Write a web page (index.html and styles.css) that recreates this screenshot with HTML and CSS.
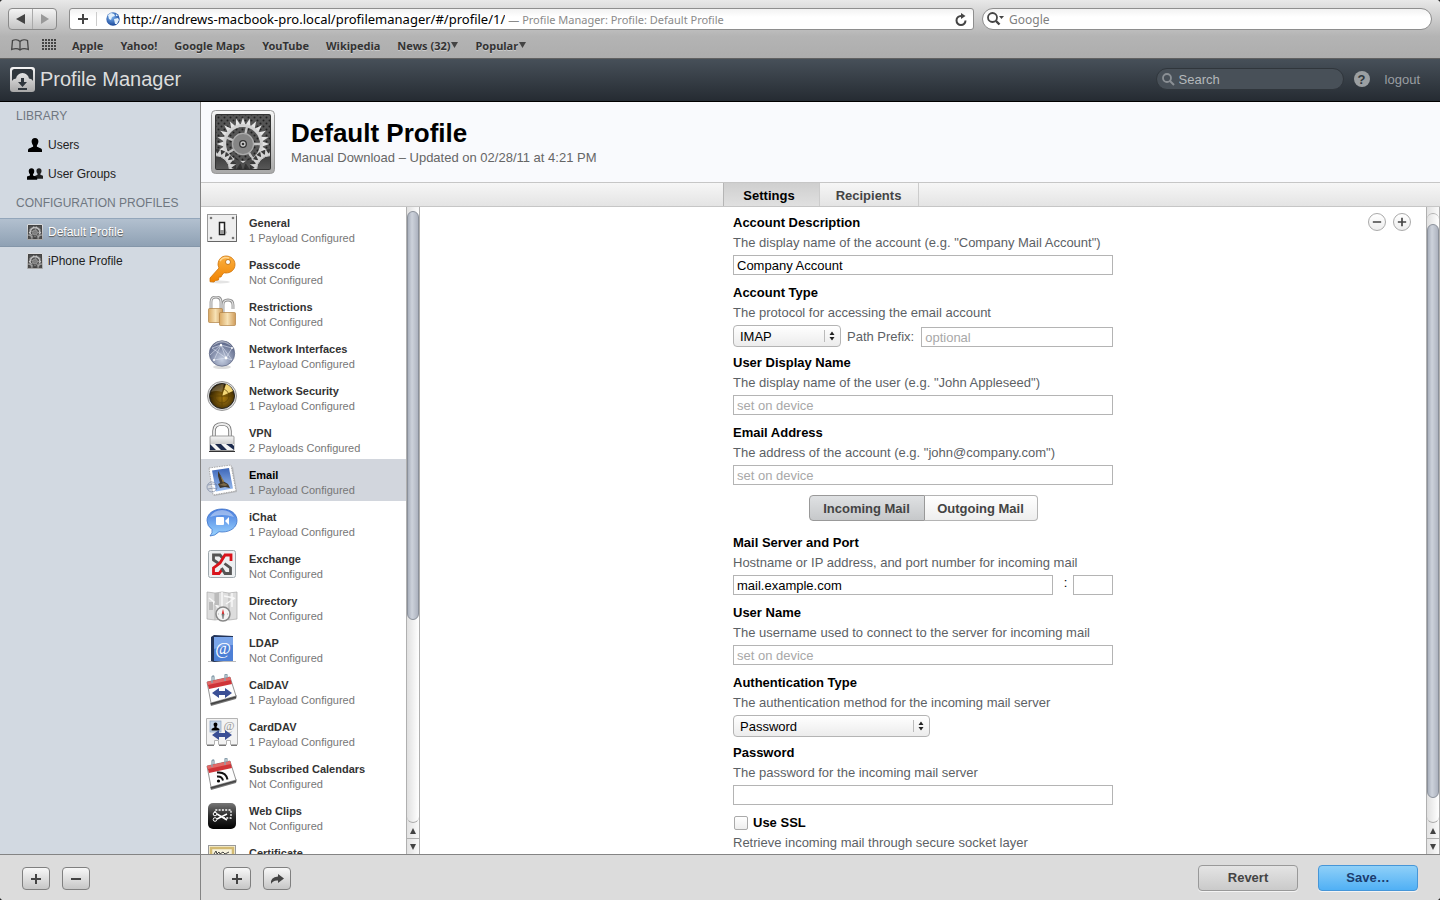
FILE: index.html
```html
<!DOCTYPE html>
<html lang="en">
<head>
    <meta charset="UTF-8">
    <meta name="viewport" content="width=device-width, initial-scale=1.0">
    <title>Profile Manager: Profile: Default Profile</title>
    <link rel="stylesheet" href="styles.css">
</head>
<body>
    <!-- shared shapes and gradients -->
    <svg class="defs" width="0" height="0" aria-hidden="true">
        <defs>
            <linearGradient id="gMetal" x1="0" y1="0" x2="0" y2="1"><stop offset="0" stop-color="#f6f6f6"/><stop offset="1" stop-color="#a8a8a8"/></linearGradient>
            <linearGradient id="gDark" x1="0" y1="0" x2="0" y2="1"><stop offset="0" stop-color="#3c3c3c"/><stop offset="1" stop-color="#777"/></linearGradient>
            <linearGradient id="gGold" x1="0" y1="0" x2="1" y2="0"><stop offset="0" stop-color="#d9a862"/><stop offset=".5" stop-color="#f7e2b5"/><stop offset="1" stop-color="#cf9c5b"/></linearGradient>
            <linearGradient id="gKey" x1="0" y1="0" x2="0" y2="1"><stop offset="0" stop-color="#fbb040"/><stop offset="1" stop-color="#f08200"/></linearGradient>
            <linearGradient id="gBlue" x1="0" y1="0" x2="0" y2="1"><stop offset="0" stop-color="#4579dd"/><stop offset="1" stop-color="#9ad4ff"/></linearGradient>
            <linearGradient id="gSky" x1="0" y1="0" x2="0" y2="1"><stop offset="0" stop-color="#3d66b8"/><stop offset="1" stop-color="#9dc0f2"/></linearGradient>
            <linearGradient id="gBlack" x1="0" y1="0" x2="0" y2="1"><stop offset="0" stop-color="#777"/><stop offset=".5" stop-color="#2a2a2a"/><stop offset="1" stop-color="#000"/></linearGradient>
            <radialGradient id="gGlobe" cx=".5" cy=".75" r=".75"><stop offset="0" stop-color="#c6cfe2"/><stop offset="1" stop-color="#525d80"/></radialGradient>
            <radialGradient id="gRadar" cx=".55" cy=".6" r=".6"><stop offset="0" stop-color="#a87a10"/><stop offset="1" stop-color="#2a1c00"/></radialGradient>
            <radialGradient id="gEarth" cx=".4" cy=".35" r=".7"><stop offset="0" stop-color="#7fb6f2"/><stop offset="1" stop-color="#123f93"/></radialGradient>

            <path id="tooth" d="M-2-14 L0-20 L2-14Z"/>
            <g id="teeth2"><use href="#tooth"/><use href="#tooth" transform="rotate(15)"/></g>
            <g id="teeth4"><use href="#teeth2"/><use href="#teeth2" transform="rotate(30)"/></g>
            <g id="teeth8"><use href="#teeth4"/><use href="#teeth4" transform="rotate(60)"/></g>
            <g id="teeth"><use href="#teeth8"/><use href="#teeth8" transform="rotate(120)"/><use href="#teeth8" transform="rotate(240)"/></g>
            <g id="cog">
                <use href="#teeth"/>
                <circle r="14" fill="none" stroke="#d2d2d2" stroke-width="2.400"/>
            </g>
            <pattern id="dots" width="6" height="6" patternUnits="userSpaceOnUse"><circle cx="1.500" cy="1.500" r="1" fill="#222"/><circle cx="4.500" cy="4.500" r="1" fill="#222"/></pattern>
            <clipPath id="plate"><rect x="5" y="5" width="54" height="54" rx="1"/></clipPath>
            <symbol id="profile" viewBox="0 0 64 64">
                <rect x=".5" y=".5" width="63" height="63" rx="4" fill="url(#gMetal)" stroke="#999"/>
                <rect x="4" y="4" width="56" height="56" rx="2" fill="#333"/>
                <g clip-path="url(#plate)">
                    <rect x="5" y="5" width="54" height="54" fill="#555"/>
                    <rect x="5" y="5" width="54" height="54" fill="url(#dots)"/>
                    <g transform="translate(32 34) scale(1.320)" fill="#e4e4e4">
                        <use href="#cog"/>
                        <path d="M0 0L3-13M0 0L14 0M0 0L-12 7M0 0L-13-5M0 0L8 12" stroke="#c4c4c4" stroke-width="1.800"/>
                        <circle r="8" fill="#858585" stroke="#aaa"/>
                        <circle r="2.500" fill="#ccc" stroke="#333"/><circle r="1" fill="#333"/>
                    </g>
                    <!-- shade under the two lower gears -->
                    <path d="M20 60L24 47 32 53 40 47 44 60z" fill="#2c2c2c" opacity=".8"/>
                    <g fill="#d4d4d4">
                        <g transform="translate(4 60)"><circle r="21" fill="#3a3a3a"/><use href="#cog" transform="scale(1.100)"/><circle r="14.500" fill="url(#gDark)" stroke="#ccc"/></g>
                        <g transform="translate(60 60)"><circle r="21" fill="#3a3a3a"/><use href="#cog" transform="scale(1.100)"/><circle r="14.500" fill="url(#gDark)" stroke="#ccc"/></g>
                    </g>
                </g>
            </symbol>
            <symbol id="person" viewBox="0 0 16 14">
                <path d="M8 0c2.200 0 3.500 1.500 3.400 3.600-.1 1.900-.9 3-1.500 3.800v1.300c1.600.9 4.500 1.300 5 2.800.2.700.1 1.700.1 2.500H1c0-.8-.1-1.800.1-2.500.5-1.500 3.400-1.900 5-2.800V7.400c-.6-.8-1.400-1.900-1.500-3.800C4.500 1.500 5.800 0 8 0z"/>
            </symbol>
            <symbol id="calendar" viewBox="0 0 32 32">
                <path d="M4 29l25-6 2-2-1 4-25 7z" fill="#777"/>
                <path d="M1 8l23-5 6 19-25 7z" fill="#fdfdfd" stroke="#777" stroke-width=".8"/>
                <path d="M1 8l23-5 2 7-23 5z" fill="#cf3438"/>
                <path d="M1 8l23-5 1 3-23 5z" fill="#e36a68"/>
                <path d="M6 9V3q1.500-2 2 0v3M19 7V1q1.500-2 2 0v3" fill="none" stroke="#8aa0ad" stroke-width="1.300"/>
                <path d="M5 30l25-7" stroke="#444" stroke-width="1.500"/>
            </symbol>
            <symbol id="arrows" viewBox="0 0 20 10">
                <path d="M0 5L7 0v3h6V0l7 5-7 5V7H7v3z" fill="#3a4f95"/>
            </symbol>
            <symbol id="plus" viewBox="0 0 12 12"><path d="M6 1v10M1 6h10" stroke="#444" stroke-width="2"/></symbol>
            <symbol id="minus" viewBox="0 0 12 12"><path d="M1 6h10" stroke="#444" stroke-width="2"/></symbol>
            <symbol id="updown" viewBox="0 0 18 14"><path d="M1.500 1v12" stroke="#bbb"/><path d="M6.500 6L9 2.500 11.500 6zM6.500 8L9 11.500 11.500 8z" fill="#222"/></symbol>
            <symbol id="up" viewBox="0 0 8 8"><path d="M1 7L4 1l3 6z" fill="#444"/></symbol>
            <symbol id="down" viewBox="0 0 8 8"><path d="M1 1l3 6 3-6z" fill="#444"/></symbol>
        </defs>
    </svg>

    <div class="window">
        <div class="browser">
            <div class="toolbar">
                <div class="history">
                    <button type="button" aria-label="Back"><svg width="10" height="10" viewBox="0 0 10 10"><path d="M9 0v10L0 5z" fill="#444"/></svg></button>
                    <button type="button" aria-label="Forward"><svg width="10" height="10" viewBox="0 0 10 10"><path d="M1 0v10l8-5z" fill="#999"/></svg></button>
                </div>
                <div class="address">
                    <button type="button" class="add" aria-label="Add bookmark"><svg width="12" height="12"><use href="#plus"/></svg></button>
                    <svg width="14" height="14" viewBox="0 0 14 14"><circle cx="7" cy="7" r="6.700" fill="url(#gEarth)"/><path d="M2 3l3-2 3 1 1 2-3 1-1 3-2-1zM8 7l4-1 1 2-2 4-2 0zM10 2l2 2-2 0z" fill="#e3f0fb"/></svg>
                    <input type="text" class="url" size="48" aria-label="Address" value="http://andrews-macbook-pro.local/profilemanager/#/profile/1/">
                    <span class="page-title">— Profile Manager: Profile: Default Profile</span>
                    <button type="button" class="reload" aria-label="Reload"><svg width="12" height="13" viewBox="0 0 12 13"><path d="M10.500 7.500A4.500 4.500 0 1 1 6 3h1" fill="none" stroke="#444" stroke-width="2"/><path d="M6 0l4.500 3L6 6z" fill="#444"/></svg></button>
                </div>
                <label class="google">
                    <svg width="18" height="14" viewBox="0 0 18 14"><circle cx="5.500" cy="5.500" r="4.500" fill="none" stroke="#444" stroke-width="1.800"/><path d="M9 9l3.500 3.500" stroke="#444" stroke-width="2.400"/><path d="M12 4h5l-2.500 3z" fill="#444"/></svg>
                    <input type="search" placeholder="Google" aria-label="Google">
                </label>
            </div>
            <nav class="bookmarks">
                <svg class="book" width="18" height="12" viewBox="0 0 18 12"><path d="M9 2.500C7 .5 3.500.5 1.500 1.500L.7 10.500C3.500 9.500 7 9.500 9 11c2-1.500 5.500-1.500 8.300-.5l-.8-9C14.500.5 11 .5 9 2.500zV11" fill="none" stroke="#444" stroke-width="1.300"/></svg>
                <svg class="sites" width="15" height="12" viewBox="0 0 15 12"><path d="M0 1h15M0 4h15M0 7h15M0 10h15" stroke="#444" stroke-width="2" stroke-dasharray="2 1"/></svg>
                <a href="#">Apple</a>
                <a href="#">Yahoo!</a>
                <a href="#">Google Maps</a>
                <a href="#">YouTube</a>
                <a href="#">Wikipedia</a>
                <a href="#">News (32)<svg width="7" height="6" viewBox="0 0 7 6"><path d="M0 0h7L3.500 6z" fill="#444"/></svg></a>
                <a href="#">Popular<svg width="7" height="6" viewBox="0 0 7 6"><path d="M0 0h7L3.500 6z" fill="#444"/></svg></a>
            </nav>
        </div>

        <header class="app-header">
            <svg width="25" height="25" viewBox="0 0 25 25"><rect width="25" height="25" rx="3" fill="url(#gMetal)"/><path d="M2 4.500q0-2.500 2.500-2.500h16q2.500 0 2.500 2.500V14q-1-2.500-4-2.500-1-5-6.500-5.500Q7 6.500 6 11.500q-3 0-4 2.500z" fill="#30373d"/><path d="M11 11h3v4h3l-4.500 5L8 15h3zM8 21h9v2H8z" fill="#30373d"/></svg>
            <h1>Profile Manager</h1>
            <label class="search">
                <svg width="13" height="13" viewBox="0 0 13 13"><circle cx="5" cy="5" r="4" fill="none" stroke="#8b9095" stroke-width="1.800"/><path d="M8 8l4 4" stroke="#8b9095" stroke-width="2"/></svg>
                <input type="search" placeholder="Search" aria-label="Search">
            </label>
            <button type="button" class="help">?</button>
            <a class="logout" href="#">logout</a>
        </header>

        <div class="app">
            <aside class="sidebar">
                <h2>LIBRARY</h2>
                <a href="#"><svg width="16" height="14"><use href="#person"/></svg>Users</a>
                <a href="#"><svg width="16" height="12" viewBox="0 0 16 12"><use href="#person" width="12" height="11" x="6" y="0" opacity=".85"/><use href="#person" width="13" height="12" x="-2" y="0"/></svg>User Groups</a>
                <h2>CONFIGURATION PROFILES</h2>
                <a href="#" class="selected"><svg width="16" height="16"><use href="#profile"/></svg>Default Profile</a>
                <a href="#"><svg width="16" height="16"><use href="#profile"/></svg>iPhone Profile</a>
            </aside>

            <main class="main">
                <div class="profile-header">
                    <svg width="64" height="64"><use href="#profile"/></svg>
                    <div class="profile-title">
                        <h2>Default Profile</h2>
                        <p>Manual Download – Updated on 02/28/11 at 4:21 PM</p>
                    </div>
                </div>

                <div class="tabs">
                    <button type="button" class="active">Settings</button>
                    <button type="button">Recipients</button>
                </div>

                <div class="panes">
                    <nav class="payloads">
                        <a href="#">
                            <svg width="32" height="32" viewBox="0 0 32 32"><rect x="1.500" y="2.500" width="29" height="27" fill="#eee" stroke="#999"/><path d="M2 29.500h28.500V4" fill="none" stroke="#666"/><g fill="#777"><circle cx="5" cy="6" r="1.300"/><circle cx="27" cy="6" r="1.300"/><circle cx="5" cy="26" r="1.300"/><circle cx="27" cy="26" r="1.300"/></g><path d="M18 13l3 8-3 2z" fill="#bbb"/><rect x="13.500" y="10.500" width="5" height="12" fill="#fff" stroke="#222" stroke-width="1.500"/><path d="M14 18h4v4h-4z" fill="#999"/></svg>
                            <span><strong>General</strong><small>1 Payload Configured</small></span>
                        </a>
                        <a href="#">
                            <svg width="32" height="32" viewBox="0 0 32 32"><ellipse cx="14" cy="28" rx="10" ry="1.500" fill="#e4e4e4"/><path d="M12 11C12 5 16 2 20 2c5 0 9 3.500 9 8.500S25 19 20 19q-1 0-2-.3L16 21l-1 2-2 0-.5 3-3 .5L8 28l-4-.3V24l9-10z" fill="url(#gKey)" stroke="#cf7206" stroke-width=".8"/><path d="M14 7q3-5 9-3" fill="none" stroke="#ffd792" stroke-width="1.500"/><circle cx="22" cy="8" r="2.500" fill="#fff" stroke="#b96300" stroke-width=".8"/></svg>
                            <span><strong>Passcode</strong><small>Not Configured</small></span>
                        </a>
                        <a href="#">
                            <svg width="32" height="32" viewBox="0 0 32 32"><g fill="none" stroke="#8d8d8d" stroke-width="2.800"><path d="M5 13V6q0-5 5-5t5 5v8M17 17V9q0-5 5-5t5 5v4"/></g><g fill="none" stroke="#e6e6e6" stroke-width="1.200"><path d="M5 13V6q0-5 5-5t5 5v8M17 17V9q0-5 5-5t5 5v4"/></g><rect x="2.500" y="12.500" width="14" height="14" rx="1" fill="url(#gGold)" stroke="#b08144" stroke-width=".7"/><rect x="13.500" y="16.500" width="16" height="13" rx="1" fill="url(#gGold)" stroke="#b08144" stroke-width=".7"/></svg>
                            <span><strong>Restrictions</strong><small>Not Configured</small></span>
                        </a>
                        <a href="#">
                            <svg width="32" height="32" viewBox="0 0 32 32"><ellipse cx="16" cy="29" rx="9" ry="2" fill="#ddd"/><circle cx="16" cy="15.500" r="12.700" fill="url(#gGlobe)" stroke="#5d6683" stroke-width=".7"/><path d="M6 10L15 7 26 10 20 20 8 22 15 7 20 20 26 22M6 10l14 10M4 17l11-10M15 7l11 15" fill="none" stroke="#dfe6f3" stroke-width=".6"/><g fill="#fff"><circle cx="15" cy="7" r="1.200"/><circle cx="20" cy="20" r="1.400"/><circle cx="8" cy="22" r="1"/><circle cx="26" cy="10" r="1"/></g><path d="M6 9q10-9 20 0-4-6-10-6T6 9z" fill="#fff" opacity=".5"/></svg>
                            <span><strong>Network Interfaces</strong><small>1 Payload Configured</small></span>
                        </a>
                        <a href="#">
                            <svg width="32" height="32" viewBox="0 0 32 32"><circle cx="16" cy="16" r="14.500" fill="#ddd" stroke="#999"/><circle cx="16" cy="16" r="12.500" fill="url(#gRadar)" stroke="#222"/><path d="M16 16L20 4q5 2 7 7z" fill="#f4d878"/><path d="M3.500 16h25M16 3.500v25" stroke="#5d4205" stroke-width=".7"/><circle cx="16" cy="16" r="7" fill="none" stroke="#5d4205" stroke-width=".7"/><path d="M5 12Q9 4 18 4l-2 8q-6-2-11 0z" fill="#fff" opacity=".2"/></svg>
                            <span><strong>Network Security</strong><small>1 Payload Configured</small></span>
                        </a>
                        <a href="#">
                            <svg width="32" height="32" viewBox="0 0 32 32"><path d="M8 16V9q0-7 8-7t8 7v7" fill="none" stroke="#777" stroke-width="3.500"/><path d="M8 16V9q0-7 8-7t8 7v7" fill="none" stroke="#eee" stroke-width="1.800"/><rect x="4" y="14" width="24" height="15" rx="1" fill="url(#gMetal)" stroke="#888" stroke-width=".8"/><path d="M4 22h24v6H4z" fill="#f4f4f4"/><path d="M4 22l6 6H4zM9 22h6l6 6h-6zM20 22h6l2 2v4z" fill="#1d2b4d"/><path d="M3 29.500h26" stroke="#333"/></svg>
                            <span><strong>VPN</strong><small>2 Payloads Configured</small></span>
                        </a>
                        <a href="#" class="selected">
                            <svg width="32" height="32" viewBox="0 0 32 32"><path d="M5 5l22-2 4 25-23 4z" fill="#888" opacity=".4"/><path d="M3 4l22-3 5 26-23 4z" fill="#fff" stroke="#aaa" stroke-dasharray="1.500 1"/><path d="M6 6.500l17-2.500 4 20.500-17 3z" fill="url(#gSky)"/><path d="M12 7l3 5 2 5 5 3 2 4-5-1-5 1-2-4 2-1-2-7z" fill="#40382d"/><path d="M14 11l4 6-1 2z" fill="#9a7c43"/><path d="M13 21l6 1 3-1-4-2z" fill="#7b6a48"/><circle cx="6" cy="23" r="5" fill="none" stroke="#6d7c9b" opacity=".6"/><path d="M2 21q5-2 9 0M2 25q5-2 9 0" fill="none" stroke="#6d7c9b" opacity=".6"/></svg>
                            <span><strong>Email</strong><small>1 Payload Configured</small></span>
                        </a>
                        <a href="#">
                            <svg width="32" height="32" viewBox="0 0 32 32"><path d="M16 3c9 0 15 5 15 11.500S25 26 16 26l-3-.3Q9 30 4 30q3-3 2-6.500-5-3.500-5-9C1 8 7 3 16 3z" fill="url(#gBlue)" stroke="#3c72c8" stroke-width=".8"/><path d="M4 11Q8 4 16 4t12 7Q16 7 4 11z" fill="#fff" opacity=".4"/><rect x="10" y="11" width="8" height="8" rx="1" fill="#fff"/><path d="M19 15l4-4v8z" fill="#fff"/></svg>
                            <span><strong>iChat</strong><small>1 Payload Configured</small></span>
                        </a>
                        <a href="#">
                            <svg width="32" height="32" viewBox="0 0 32 32"><rect x="2.500" y="2.500" width="27" height="27" rx="2" fill="#edf0f2" stroke="#9fa8ad"/><g fill="none" stroke-width="2.800"><path d="M16.500 10L14 7H7.500v5l6 4" stroke="#555"/><path d="M25 13V7h-6l-5 8-6.500 5v5.500H13l3-4" stroke="#d9141c"/><path d="M18.500 15.500l6 4.500v5.500H19L15.500 20" stroke="#555"/></g></svg>
                            <span><strong>Exchange</strong><small>Not Configured</small></span>
                        </a>
                        <a href="#">
                            <svg width="32" height="32" viewBox="0 0 32 32"><path d="M1 2l8 1 7-1 7 1 8-1v27l-8 1-7-1-7 1-8-1z" fill="#ddd" stroke="#aaa" stroke-width=".7"/><path d="M9 3v27M23 3v27" stroke="#b5b5b5"/><path d="M16 2v27M3 8l5 4-4 7M12 3l-2 12 5 5M18 6l10 2M20 14l9-6M26 3v14" fill="none" stroke="#f8f8f8" stroke-width="1.500"/><path d="M9 3h4v12H9zM3 12h4v8H3z" fill="#bbb"/><circle cx="17" cy="24" r="7" fill="#f4f4f4" stroke="#888" stroke-width="1.500"/><path d="M17 19l1.200 5h-2.400z" fill="#d22"/><path d="M17 29l1.200-5h-2.400zM12 24h1M21 24h1" fill="#777" stroke="#777" stroke-width=".5"/></svg>
                            <span><strong>Directory</strong><small>Not Configured</small></span>
                        </a>
                        <a href="#">
                            <svg width="32" height="32" viewBox="0 0 32 32"><path d="M2 29.500h28" stroke="#bbb"/><path d="M5 5l3-2 19 1v24l-19 2-3-1z" fill="#223459"/><path d="M8 5h19v24H8z" fill="#4d80d6"/><path d="M8 5h19v8q-8 0-19 4z" fill="#7aa5ea"/><text x="17" y="22" font-family="Liberation Serif" font-size="17" text-anchor="middle" fill="#fff">@</text></svg>
                            <span><strong>LDAP</strong><small>Not Configured</small></span>
                        </a>
                        <a href="#">
                            <svg width="32" height="32" viewBox="0 0 32 32"><use href="#calendar" width="32" height="32"/><use href="#arrows" width="20" height="10" x="6" y="14"/></svg>
                            <span><strong>CalDAV</strong><small>1 Payload Configured</small></span>
                        </a>
                        <a href="#">
                            <svg width="32" height="32" viewBox="0 0 32 32"><path d="M.5 2.500h31v26h-7v-4h-4v4h-8v-4h-4v4h-8z" fill="#f3f3f3" stroke="#b4b4b4"/><path d="M1 29.500h7M13 29.500h7M25 29.500h6" stroke="#777"/><rect x="4" y="5" width="11" height="11" fill="#c3d5ea" stroke="#8ba3c0" stroke-width=".7"/><use href="#person" x="5" y="6" width="9" height="9"/><text x="23" y="14" font-family="Liberation Serif" font-size="12" text-anchor="middle" fill="#999">@</text><use href="#arrows" width="20" height="10" x="6" y="14"/></svg>
                            <span><strong>CardDAV</strong><small>1 Payload Configured</small></span>
                        </a>
                        <a href="#">
                            <svg width="32" height="32" viewBox="0 0 32 32"><use href="#calendar" width="32" height="32"/><circle cx="12.500" cy="23" r="1.600"/><path d="M11 18.500q5-.5 6 4M11 14.500q9-1 10.500 7" fill="none" stroke="#111" stroke-width="2"/></svg>
                            <span><strong>Subscribed Calendars</strong><small>Not Configured</small></span>
                        </a>
                        <a href="#">
                            <svg width="32" height="32" viewBox="0 0 32 32"><rect x="2" y="3" width="28" height="26" rx="5" fill="url(#gBlack)"/><path d="M9 13V10h16v8h-7" fill="none" stroke="#fff" stroke-width="1.300" stroke-dasharray="2 1.300"/><path d="M11 19l10-5M11 14l10 6" stroke="#fff" stroke-width="1.500"/><circle cx="9" cy="14" r="1.800" fill="none" stroke="#fff"/><circle cx="9" cy="19.500" r="1.800" fill="none" stroke="#fff"/></svg>
                            <span><strong>Web Clips</strong><small>Not Configured</small></span>
                        </a>
                        <a href="#">
                            <svg width="32" height="32" viewBox="0 0 32 32"><rect x="2.500" y="3.500" width="27" height="24" fill="#f8f3dd" stroke="#999"/><rect x="5" y="6" width="22" height="19" fill="none" stroke="#d3ba72" stroke-width="2.500"/><path d="M8 12l2-3 1 3 2-2 1 2 3-2 2 2 4-2" fill="none" stroke="#444"/></svg>
                            <span><strong>Certificate</strong><small>Not Configured</small></span>
                        </a>
                    </nav>
                    <div class="scrollbar list-scroll">
                        <div class="track"><div class="thumb"></div></div>
                        <svg width="8" height="8"><use href="#up"/></svg>
                        <svg width="8" height="8"><use href="#down"/></svg>
                    </div>

                    <div class="detail">
                        <form class="settings">
                            <div class="field">
                                <label for="description">Account Description</label>
                                <p>The display name of the account (e.g. "Company Mail Account")</p>
                                <div class="control"><input type="text" id="description" value="Company Account"></div>
                            </div>
                            <div class="field">
                                <label for="type">Account Type</label>
                                <p>The protocol for accessing the email account</p>
                                <div class="control">
                                    <div class="select short">
                                        <select id="type"><option>IMAP</option><option>POP</option></select>
                                        <svg width="18" height="14"><use href="#updown"/></svg>
                                    </div>
                                    <label class="inline" for="prefix">Path Prefix:</label>
                                    <input type="text" id="prefix" placeholder="optional">
                                </div>
                            </div>
                            <div class="field">
                                <label for="displayName">User Display Name</label>
                                <p>The display name of the user (e.g. "John Appleseed")</p>
                                <div class="control"><input type="text" id="displayName" placeholder="set on device"></div>
                            </div>
                            <div class="field">
                                <label for="address">Email Address</label>
                                <p>The address of the account (e.g. "john@company.com")</p>
                                <div class="control"><input type="text" id="address" placeholder="set on device"></div>
                            </div>
                            <div class="segments">
                                <button type="button" class="active">Incoming Mail</button>
                                <button type="button">Outgoing Mail</button>
                            </div>
                            <div class="field">
                                <label for="server">Mail Server and Port</label>
                                <p>Hostname or IP address, and port number for incoming mail</p>
                                <div class="control">
                                    <input type="text" id="server" value="mail.example.com">
                                    <span class="colon">:</span>
                                    <input type="text" class="port" aria-label="Port">
                                </div>
                            </div>
                            <div class="field">
                                <label for="userName">User Name</label>
                                <p>The username used to connect to the server for incoming mail</p>
                                <div class="control"><input type="text" id="userName" placeholder="set on device"></div>
                            </div>
                            <div class="field">
                                <label for="auth">Authentication Type</label>
                                <p>The authentication method for the incoming mail server</p>
                                <div class="control">
                                    <div class="select">
                                        <select id="auth"><option>Password</option><option>None</option></select>
                                        <svg width="18" height="14"><use href="#updown"/></svg>
                                    </div>
                                </div>
                            </div>
                            <div class="field">
                                <label for="password">Password</label>
                                <p>The password for the incoming mail server</p>
                                <div class="control"><input type="password" id="password"></div>
                            </div>
                            <div class="field">
                                <label class="check"><input type="checkbox">Use SSL</label>
                                <p>Retrieve incoming mail through secure socket layer</p>
                            </div>
                        </form>
                        <div class="round-buttons">
                            <button type="button" aria-label="Remove payload"><svg width="10" height="10"><use href="#minus"/></svg></button>
                            <button type="button" aria-label="Add payload"><svg width="10" height="10"><use href="#plus"/></svg></button>
                        </div>
                    </div>
                    <div class="scrollbar detail-scroll">
                        <div class="track"><div class="thumb"></div></div>
                        <svg width="8" height="8"><use href="#up"/></svg>
                        <svg width="8" height="8"><use href="#down"/></svg>
                    </div>
                </div>
            </main>
        </div>

        <footer class="footer">
            <div class="footer-left">
                <button type="button" class="square" aria-label="Add profile"><svg width="12" height="12"><use href="#plus"/></svg></button>
                <button type="button" class="square" aria-label="Remove profile"><svg width="12" height="12"><use href="#minus"/></svg></button>
            </div>
            <div class="footer-right">
                <button type="button" class="square" aria-label="Add"><svg width="12" height="12"><use href="#plus"/></svg></button>
                <button type="button" class="square" aria-label="Actions"><svg width="14" height="12" viewBox="0 0 14 12"><path d="M8 1l6 4.500L8 10V7.500Q3 7 1 11 0 4 8 3.500z" fill="#444"/></svg></button>
                <button type="button" class="push revert">Revert</button>
                <button type="button" class="push save">Save…</button>
            </div>
        </footer>
    </div>
</body>
</html>
```
FILE: styles.css
```css
* {
    box-sizing: border-box;
}

body {
    margin: 0;
    background: #2a2a2a;
    font-family: "Liberation Sans", Arial, sans-serif;
    font-size: 13px;
    color: #000;
}

h1, h2, p {
    margin: 0;
    font-weight: normal;
}

a {
    color: inherit;
    text-decoration: none;
}

button, input, select {
    margin: 0;
    padding: 0;
    border: none;
    background: none;
    font: inherit;
    color: inherit;
}

button {
    display: flex;
    align-items: center;
    justify-content: center;
}

input[type="search"] {
    appearance: none;
    flex: 1;
    min-width: 0;
}

svg {
    display: block;
    flex: none;
}

.defs {
    position: absolute;
}

.window {
    display: flex;
    flex-direction: column;
    height: 100vh;
    border-radius: 4px;
    overflow: hidden;
    background: #fff;
}

/* browser chrome */
.browser {
    flex: none;
    height: 59px;
    padding: 8px 8px 0;
    background: linear-gradient(#e8e8e8, #b4b4b4 36px, #adadad);
    border-bottom: 1px solid #616161;
    font-family: "Noto Sans", sans-serif;
}

.toolbar {
    display: flex;
    height: 22px;
}

.history {
    display: flex;
    width: 49px;
    margin-right: 12px;
    border: 1px solid #8a8a8a;
    border-radius: 4px;
    background: linear-gradient(#f4f4f4, #c4c4c4);
}

.history button {
    flex: 1;
}

.history button + button {
    border-left: 1px solid #aaa;
}

.address {
    display: flex;
    flex: 1;
    align-items: center;
    margin-right: 8px;
    border: 1px solid #8e8e8e;
    border-radius: 3px;
    background: linear-gradient(#f2f2f2, #fff 8px);
}

.add {
    width: 27px;
    height: 14px;
    margin-right: 9px;
    border-right: 1px solid #ccc;
}

.url {
    field-sizing: content;
    margin: 0 3px;
}

.page-title {
    flex: 1;
    font-size: 11px;
    color: #8a8a8a;
}

.reload {
    margin-right: 6px;
}

.google {
    display: flex;
    align-items: center;
    gap: 4px;
    width: 450px;
    padding: 0 4px;
    border: 1px solid #8e8e8e;
    border-radius: 11px;
    background: linear-gradient(#f2f2f2, #fff 8px);
}

.google input {
    font-size: 12px;
}

.google input::placeholder {
    color: #808080;
}

.bookmarks {
    display: flex;
    align-items: center;
    gap: 17px;
    height: 30px;
    padding: 0 3px;
    font-size: 11px;
    font-weight: bold;
    color: #333;
    text-shadow: 0 1px 0 #ccc;
}

.bookmarks a {
    display: flex;
    align-items: center;
    gap: 1px;
}

.book {
    margin-right: -4px;
}

.sites {
    margin-right: -2px;
}

/* application header */
.app-header {
    display: flex;
    flex: none;
    align-items: center;
    height: 43px;
    padding: 0 20px 2px 10px;
    background: linear-gradient(#475059, #252b32);
    border-bottom: 1px solid #000;
    color: #ddd;
}

.app-header h1 {
    margin-left: 5px;
    font-size: 20px;
    line-height: 24px;
}

.search {
    display: flex;
    align-items: center;
    gap: 4px;
    width: 188px;
    height: 22px;
    margin-left: auto;
    padding: 0 5px;
    border: 1px solid #30363c;
    border-radius: 11px;
    background: #485058;
}

.search input::placeholder {
    color: #b4b8bb;
}

.help {
    width: 16px;
    height: 16px;
    margin: 0 15px 0 10px;
    border-radius: 8px;
    background: #9b9fa2;
    color: #30363c;
    font-weight: bold;
}

.logout {
    color: #9a9ea2;
}

.app {
    display: flex;
    flex: 1;
    min-height: 0;
}

/* sidebar */
.sidebar {
    flex: none;
    width: 201px;
    border-right: 1px solid #848484;
    background: #d2d9e1;
    font-size: 12px;
    color: #222;
}

.sidebar h2 {
    padding-left: 16px;
    font-size: 12px;
    line-height: 29px;
    color: #6f7780;
}

.sidebar a {
    display: flex;
    align-items: center;
    gap: 5px;
    height: 29px;
    padding: 0 0 2px 27px;
}

.sidebar a.selected {
    border-top: 1px solid #93a6ba;
    border-bottom: 1px solid #8496a9;
    background: linear-gradient(#b2c0cf, #8fa1b4);
    color: #fff;
    text-shadow: 0 1px 1px #555;
}

/* main area */
.main {
    display: flex;
    flex: 1;
    flex-direction: column;
    min-width: 0;
}

.profile-header {
    display: flex;
    flex: none;
    align-items: center;
    gap: 16px;
    height: 80px;
    padding: 0 10px;
    background: #f9fafd;
}

.profile-title {
    padding-top: 2px;
}

.profile-header h2 {
    font-size: 26px;
    line-height: 30px;
    font-weight: bold;
}

.profile-header p {
    line-height: 20px;
    color: #666;
}

.tabs {
    display: flex;
    flex: none;
    justify-content: center;
    height: 25px;
    border-top: 1px solid #c6c6c6;
    border-bottom: 1px solid #c6c6c6;
    background: linear-gradient(#f6f6f6, #e4e4e4);
}

.tabs button {
    width: 99px;
    padding-top: 2px;
    border-right: 1px solid #ccc;
    font-weight: bold;
    color: #444;
}

.tabs .active {
    width: 97px;
    padding-right: 4px;
    border-left: 1px solid #b5b5b5;
    background: linear-gradient(#cfcfcf, #e0e0e0);
    color: #000;
}

.panes {
    display: flex;
    flex: 1;
    min-height: 0;
}

.payloads {
    flex: none;
    width: 205px;
    overflow: hidden;
    font-size: 11px;
}

.payloads a {
    display: flex;
    align-items: center;
    gap: 11px;
    height: 42px;
    padding-left: 5px;
}

.payloads span {
    padding-top: 6px;
}

.payloads a.selected {
    background: #d2d6dd;
}

.payloads strong {
    display: block;
    line-height: 15px;
    color: #333;
}

.payloads .selected strong {
    color: #000;
}

.payloads small {
    display: block;
    font-size: 11px;
    line-height: 15px;
    color: #777;
}

/* scrollbars */
.scrollbar {
    display: flex;
    flex: none;
    flex-direction: column;
    align-items: center;
    width: 14px;
    border-left: 1px solid #b0b0b0;
    border-right: 1px solid #b0b0b0;
    background: linear-gradient(to right, #e2e2e2, #fafafa);
}

.scrollbar svg {
    box-sizing: content-box;
    padding: 4px 2px 3px;
}

.scrollbar svg:last-child {
    border-top: 1px solid #b0b0b0;
}

.track {
    flex: 1;
    width: 12px;
    border-bottom: 1px solid #aaa;
    border-radius: 6px;
    background: linear-gradient(to right, #e0e0e0, #fff);
}

.thumb {
    border: 1px solid #8a909a;
    border-radius: 6px;
    background: linear-gradient(to right, #a9b0bc, #cdd2db 40%, #adb3bf);
}

.list-scroll .track {
    padding-top: 4px;
}

.list-scroll .thumb {
    height: 67%;
}

.detail-scroll .track {
    margin-top: 6px;
    padding-top: 10px;
    border-top: 1px solid #b0b0b0;
}

.detail-scroll .thumb {
    height: 96%;
}

/* settings form */
.detail {
    display: grid;
    flex: 1;
    grid-template-columns: 1fr 380px 1fr;
    min-width: 0;
    overflow: hidden;
}

.settings {
    display: flex;
    grid-column: 2;
    flex-direction: column;
    gap: 6px;
    padding-top: 6px;
}

.field label {
    display: block;
    line-height: 20px;
    font-weight: bold;
}

.field p {
    line-height: 20px;
    white-space: nowrap;
    color: #5c6165;
}

.control {
    display: flex;
    align-items: flex-start;
    height: 22px;
    margin-top: 2px;
}

.control input {
    flex: 1;
    min-width: 0;
    height: 20px;
    padding: 0 3px;
    border: 1px solid #b4b4b4;
    background: #fff;
}

.control input::placeholder {
    color: #a8a8a8;
}

.control .inline {
    margin: 0 7px 0 6px;
    line-height: 24px;
    font-weight: normal;
    color: #5c6165;
}

.control .inline + input {
    align-self: flex-end;
}

.control .port {
    flex: none;
    width: 40px;
}

.colon {
    width: 20px;
    padding-left: 5px;
    text-align: center;
}

.select {
    display: grid;
    align-items: center;
    width: 197px;
}

.select.short {
    width: 108px;
}

.select select, .select svg {
    grid-area: 1 / 1;
}

.select select {
    appearance: none;
    height: 22px;
    padding-left: 6px;
    border: 1px solid #b4b4b4;
    border-radius: 4px;
    background: linear-gradient(#fff, #ececec);
}

.select svg {
    justify-self: end;
    pointer-events: none;
}

.segments {
    display: flex;
    justify-content: center;
    height: 34px;
    padding: 2px 0 6px;
}

.segments button {
    width: 113px;
    border: 1px solid #b4b4b4;
    border-left: none;
    border-radius: 0 4px 4px 0;
    background: linear-gradient(#fff, #eee);
    font-weight: bold;
    color: #444;
}

.segments .active {
    width: 116px;
    border: 1px solid #999;
    border-radius: 4px 0 0 4px;
    background: linear-gradient(#dfe1e3, #c6c8ca);
}

.field .check {
    display: flex;
    align-items: center;
    gap: 5px;
}

.check input {
    appearance: none;
    width: 14px;
    height: 14px;
    margin-left: 1px;
    border: 1px solid #aaa;
    border-radius: 2px;
    background: linear-gradient(#fff, #eee);
}

.round-buttons {
    display: flex;
    justify-content: flex-end;
    gap: 7px;
    padding: 6px 15px 0 0;
}

.round-buttons button {
    width: 18px;
    height: 18px;
    border: 1px solid #aaa;
    border-radius: 9px;
    background: linear-gradient(#fff, #eee);
}

/* bottom bar */
.footer {
    display: flex;
    flex: none;
    height: 46px;
    border-top: 1px solid #848484;
    background: #dcdcdc;
}

.footer-left, .footer-right {
    display: flex;
    align-items: center;
    gap: 12px;
    padding: 0 22px;
}

.footer-left {
    width: 201px;
    border-right: 1px solid #848484;
}

.footer-right {
    flex: 1;
}

.square {
    width: 28px;
    height: 23px;
    margin-top: 2px;
    border: 1px solid #808080;
    border-radius: 4px;
    background: linear-gradient(#f8f8f8, #c6c6c6);
}

.push {
    width: 100px;
    height: 26px;
    border: 1px solid #999;
    border-radius: 4px;
    background: linear-gradient(#e4e4e4, #cacaca);
    box-shadow: 0 1px 0 #f4f4f4;
    font-weight: bold;
    color: #444;
}

.revert {
    margin: 0 8px 0 auto;
}

.save {
    border-color: #4696d8;
    background: linear-gradient(#8fd0f8, #50b0f5);
    color: #1b3c6e;
}
```
